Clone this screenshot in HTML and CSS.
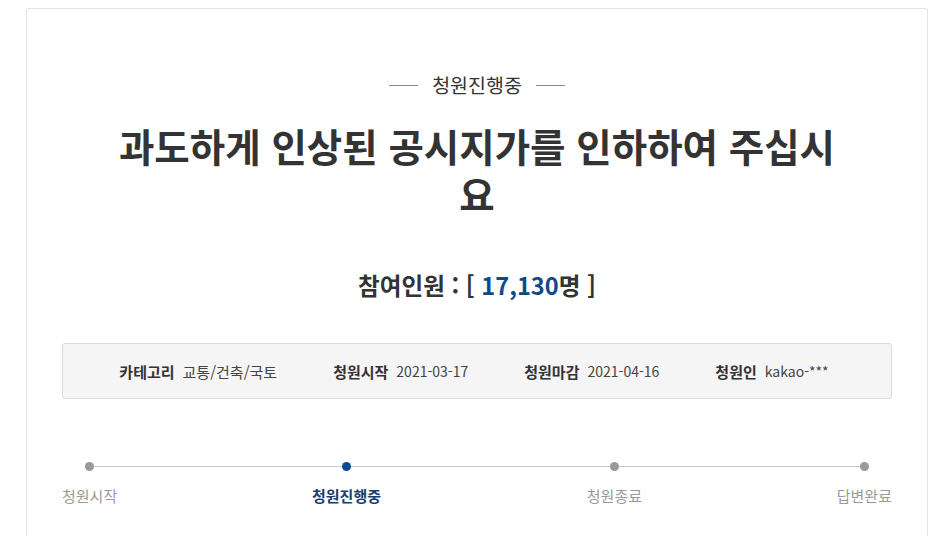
FILE: index.html
```html
<!DOCTYPE html>
<html lang="ko">
<head>
<meta charset="utf-8">
<link rel="stylesheet" href="styles.css">
</head>
<body>
<div class="card">
  <div class="status"><span class="dash"></span><span class="status-text">청원진행중</span><span class="dash"></span></div>
  <h1 class="title">과도하게 인상된 공시지가를 인하하여 주십시요</h1>
  <div class="count">참여인원 : [ <span class="num">17,130</span>명 ]</div>
  <ul class="info">
    <li><strong>카테고리</strong><span class="ko">교통/건축/국토</span></li>
    <li><strong>청원시작</strong><span>2021-03-17</span></li>
    <li><strong>청원마감</strong><span>2021-04-16</span></li>
    <li><strong>청원인</strong><span>kakao-***</span></li>
  </ul>
  <div class="progress">
    <div class="track"></div>
    <div class="step"><i class="dot"></i><span class="label">청원시작</span></div>
    <div class="step active"><i class="dot"></i><span class="label">청원진행중</span></div>
    <div class="step"><i class="dot"></i><span class="label">청원종료</span></div>
    <div class="step"><i class="dot"></i><span class="label">답변완료</span></div>
  </div>
</div>
</body>
</html>
```
FILE: styles.css
```css
* { box-sizing: border-box; }
html, body { margin: 0; padding: 0; background: #fff; }
body {
  font-family: "Noto Sans CJK KR", "Noto Sans", sans-serif;
  color: #333;
  height: 536px;
  overflow: hidden;
}
.card {
  margin: 8px 0 0 26px;
  width: 902px;
  height: 528px;
  border: 1px solid #e3e3e3;
  border-bottom: 0;
  border-radius: 3px 3px 0 0;
  padding: 62px 35px 0;
}
.status {
  display: flex;
  justify-content: center;
  align-items: center;
  height: 28px;
  gap: 14px;
}
.dash { width: 29px; height: 1px; background: #888; }
.status-text { font-size: 19.5px; line-height: 28px; color: #333; }
.title {
  margin: 22px auto 0;
  max-width: 730px;
  text-align: center;
  font-size: 38.5px;
  line-height: 48px;
  font-weight: 700;
  color: #333;
}
.count {
  margin-top: 50px;
  text-align: center;
  font-size: 23.6px;
  line-height: 36px;
  font-weight: 700;
  color: #333;
}
.count .num { color: #0c4a8d; }
.info {
  list-style: none;
  margin: 40px 0 0;
  padding: 0 6px 0 0;
  height: 56px;
  border: 1px solid #dadada;
  border-radius: 3px;
  background: #f5f5f5;
  display: flex;
  justify-content: center;
  align-items: center;
  gap: 56px;
  font-size: 14px;
}
.info li { display: flex; align-items: center; gap: 8px; }
.info strong { font-weight: 700; color: #333; font-size: 15px; }
.info span { color: #444; }
.info span.ko { font-size: 15px; }
.progress {
  position: relative;
  margin-top: 63px;
  display: flex;
  justify-content: space-between;
}
.track {
  position: absolute;
  left: 27px;
  right: 28px;
  top: 4px;
  height: 1px;
  background: #c8c8c8;
}
.step {
  display: flex;
  flex-direction: column;
  align-items: center;
  gap: 15px;
  position: relative;
}
.dot {
  display: block;
  width: 9px;
  height: 9px;
  border-radius: 50%;
  background: #999;
}
.label { font-size: 15px; line-height: 20px; color: #999; }
.step.active { margin-right: 11px; }
.step.active .dot { background: #0c4a8d; }
.step.active .label { color: #1a3c6e; font-weight: 700; }
```
